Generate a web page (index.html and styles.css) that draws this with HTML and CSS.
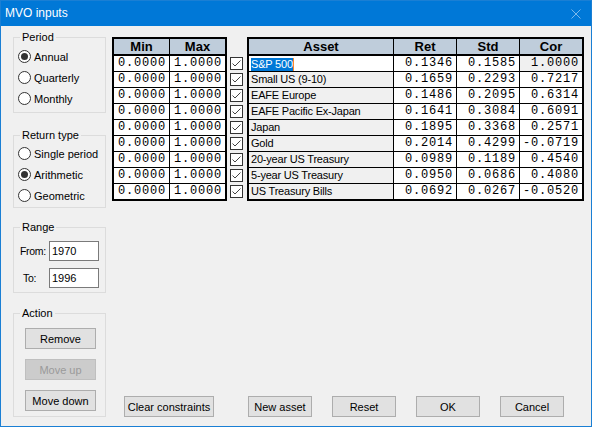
FILE: index.html
```html
<!DOCTYPE html>
<html lang="en">
<head>
<meta charset="utf-8">
<title>MVO inputs</title>
<link rel="stylesheet" href="styles.css">
</head>
<body>
<div class="window">
  <div class="titlebar">
    <span class="title">MVO inputs</span>
    <svg class="close" width="10" height="10" viewBox="0 0 10 10"><path d="M0.5 0.5 L9.5 9.5 M9.5 0.5 L0.5 9.5" stroke="#7db8ea" stroke-width="1" fill="none"/></svg>
  </div>
  <div class="client">
    <div class="sidebar">
      <fieldset class="group g-period">
        <legend>Period</legend>
        <div class="radio"><span class="dot on"></span>Annual</div>
        <div class="radio"><span class="dot"></span>Quarterly</div>
        <div class="radio"><span class="dot"></span>Monthly</div>
      </fieldset>
      <fieldset class="group g-return">
        <legend>Return type</legend>
        <div class="radio"><span class="dot"></span>Single period</div>
        <div class="radio"><span class="dot on"></span>Arithmetic</div>
        <div class="radio"><span class="dot"></span>Geometric</div>
      </fieldset>
      <fieldset class="group g-range">
        <legend>Range</legend>
        <div class="field"><span class="flabel">From:</span><input class="input" type="text" value="1970"></div>
        <div class="field"><span class="flabel to">To:</span><input class="input" type="text" value="1996"></div>
      </fieldset>
      <fieldset class="group g-action">
        <legend>Action</legend>
        <button class="btn side">Remove</button>
        <button class="btn side" disabled>Move up</button>
        <button class="btn side">Move down</button>
      </fieldset>
    </div>
    <div class="main">
      <div class="grids">
        <div class="grid minmax">
          <div class="hd">Min</div><div class="hd">Max</div>
          <div class="num">0.0000</div><div class="num">1.0000</div>
          <div class="num">0.0000</div><div class="num">1.0000</div>
          <div class="num">0.0000</div><div class="num">1.0000</div>
          <div class="num">0.0000</div><div class="num">1.0000</div>
          <div class="num">0.0000</div><div class="num">1.0000</div>
          <div class="num">0.0000</div><div class="num">1.0000</div>
          <div class="num">0.0000</div><div class="num">1.0000</div>
          <div class="num">0.0000</div><div class="num">1.0000</div>
          <div class="num">0.0000</div><div class="num">1.0000</div>
        </div>
        <div class="checks">
          <svg class="cb" width="13" height="13" viewBox="0 0 13 13"><rect x="0.5" y="0.5" width="12" height="12" fill="#fff" stroke="#333"/><path d="M2.5 6.5 L5 9 L10.5 3.5" stroke="#444" fill="none"/></svg>
          <svg class="cb" width="13" height="13" viewBox="0 0 13 13"><rect x="0.5" y="0.5" width="12" height="12" fill="#fff" stroke="#333"/><path d="M2.5 6.5 L5 9 L10.5 3.5" stroke="#444" fill="none"/></svg>
          <svg class="cb" width="13" height="13" viewBox="0 0 13 13"><rect x="0.5" y="0.5" width="12" height="12" fill="#fff" stroke="#333"/><path d="M2.5 6.5 L5 9 L10.5 3.5" stroke="#444" fill="none"/></svg>
          <svg class="cb" width="13" height="13" viewBox="0 0 13 13"><rect x="0.5" y="0.5" width="12" height="12" fill="#fff" stroke="#333"/><path d="M2.5 6.5 L5 9 L10.5 3.5" stroke="#444" fill="none"/></svg>
          <svg class="cb" width="13" height="13" viewBox="0 0 13 13"><rect x="0.5" y="0.5" width="12" height="12" fill="#fff" stroke="#333"/><path d="M2.5 6.5 L5 9 L10.5 3.5" stroke="#444" fill="none"/></svg>
          <svg class="cb" width="13" height="13" viewBox="0 0 13 13"><rect x="0.5" y="0.5" width="12" height="12" fill="#fff" stroke="#333"/><path d="M2.5 6.5 L5 9 L10.5 3.5" stroke="#444" fill="none"/></svg>
          <svg class="cb" width="13" height="13" viewBox="0 0 13 13"><rect x="0.5" y="0.5" width="12" height="12" fill="#fff" stroke="#333"/><path d="M2.5 6.5 L5 9 L10.5 3.5" stroke="#444" fill="none"/></svg>
          <svg class="cb" width="13" height="13" viewBox="0 0 13 13"><rect x="0.5" y="0.5" width="12" height="12" fill="#fff" stroke="#333"/><path d="M2.5 6.5 L5 9 L10.5 3.5" stroke="#444" fill="none"/></svg>
          <svg class="cb" width="13" height="13" viewBox="0 0 13 13"><rect x="0.5" y="0.5" width="12" height="12" fill="#fff" stroke="#333"/><path d="M2.5 6.5 L5 9 L10.5 3.5" stroke="#444" fill="none"/></svg>
        </div>
        <div class="grid assets">
          <div class="hd">Asset</div><div class="hd">Ret</div><div class="hd">Std</div><div class="hd">Cor</div>
          <div class="name"><span class="sel">S&amp;P 500</span></div><div class="num">0.1346</div><div class="num">0.1585</div><div class="num ro">1.0000</div>
          <div class="name ro">Small US (9-10)</div><div class="num">0.1659</div><div class="num">0.2293</div><div class="num">0.7217</div>
          <div class="name ro">EAFE Europe</div><div class="num">0.1486</div><div class="num">0.2095</div><div class="num">0.6314</div>
          <div class="name ro">EAFE Pacific Ex-Japan</div><div class="num">0.1641</div><div class="num">0.3084</div><div class="num">0.6091</div>
          <div class="name ro">Japan</div><div class="num">0.1895</div><div class="num">0.3368</div><div class="num">0.2571</div>
          <div class="name ro">Gold</div><div class="num">0.2014</div><div class="num">0.4299</div><div class="num">-0.0719</div>
          <div class="name ro">20-year US Treasury</div><div class="num">0.0989</div><div class="num">0.1189</div><div class="num">0.4540</div>
          <div class="name ro">5-year US Treasury</div><div class="num">0.0950</div><div class="num">0.0686</div><div class="num">0.4080</div>
          <div class="name ro">US Treasury Bills</div><div class="num">0.0692</div><div class="num">0.0267</div><div class="num">-0.0520</div>
        </div>
      </div>
      <div class="actions">
        <button class="btn wide">Clear constraints</button>
        <button class="btn std">New asset</button>
        <button class="btn std">Reset</button>
        <button class="btn std">OK</button>
        <button class="btn std">Cancel</button>
      </div>
    </div>
  </div>
</div>
</body>
</html>
```

FILE: styles.css
```css
* { box-sizing: border-box; }
html, body { margin: 0; padding: 0; background: #f0f0f0; }
body { font-family: "Liberation Sans", Arial, sans-serif; font-size: 11px; color: #000; }

.window {
  width: 592px;
  height: 427px;
  border: 1px solid #1a7fd4;
  background: #f0f0f0;
  display: flex;
  flex-direction: column;
}

.titlebar {
  height: 25px;
  background: #0078d7;
  color: #fff;
  display: flex;
  align-items: center;
  justify-content: space-between;
  padding: 0 10px 0 4px;
  flex: none;
}
.title { font-size: 12px; line-height: 15px; }
.close { display: block; }

.client {
  flex: 1;
  display: flex;
  min-height: 0;
}

.sidebar {
  width: 105px;
  padding-left: 12px;
  flex: none;
  display: flex;
  flex-direction: column;
}

.group {
  margin: 0;
  padding: 0;
  min-width: 0;
  border: 1px solid #dcdcdc;
  width: 93px;
}
.group legend {
  margin-left: 6px;
  padding: 0 2px;
  line-height: 15px;
  height: 15px;
  font-size: 11px;
}
.g-period { margin-top: 4px; height: 83px; padding-top: 1px; }
.g-return { margin-top: 15px; height: 80px; }
.g-range { margin-top: 12px; height: 73px; padding-top: 6px; }
.g-action { margin-top: 13px; height: 111px; padding-top: 7px; display: flex; flex-direction: column; gap: 10px; }

.radio {
  height: 21px;
  display: flex;
  align-items: center;
  padding-left: 4px;
  gap: 3px;
}
.dot {
  width: 13px;
  height: 13px;
  border-radius: 50%;
  border: 1px solid #333;
  background: #fff;
  display: flex;
  align-items: center;
  justify-content: center;
  flex: none;
}
.dot.on::after {
  content: "";
  width: 7px;
  height: 7px;
  border-radius: 50%;
  background: #333;
}

.field {
  display: flex;
  align-items: center;
  height: 20px;
  padding-left: 6px;
  margin-bottom: 7px;
}
.flabel { width: 29px; flex: none; font-size: 10.5px; letter-spacing: -0.3px; }
.flabel.to { padding-left: 3px; }
.input {
  width: 50px;
  height: 20px;
  border: 1px solid #7a7a7a;
  background: #fff;
  font-family: "Liberation Sans", Arial, sans-serif;
  font-size: 11px;
  padding: 0 2px;
  margin: 0;
  color: #000;
}

.btn {
  font-family: "Liberation Sans", Arial, sans-serif;
  font-size: 11px;
  color: #000;
  background: #e1e1e1;
  border: 1px solid #adadad;
  height: 21px;
  padding: 0;
  margin: 0;
}
.btn:disabled { background: #cccccc; border-color: #bfbfbf; color: #9a9a9a; }
.btn.side { width: 71px; margin-left: 11px; flex: none; }

.main {
  flex: 1;
  margin-left: 6px;
  padding-top: 11px;
  display: flex;
  flex-direction: column;
}

.grids { display: flex; align-items: flex-start; }

.grid {
  display: grid;
  gap: 1px;
  background: #000;
  border: 2px solid #000;
  grid-auto-rows: 15px;
  grid-template-rows: 16px;
}
.minmax { grid-template-columns: 55px 55px; }
.assets { grid-template-columns: 144px 62px 62px 62px; }

.hd {
  background: #bfcddb;
  border-bottom: 1px solid #000;
  font-weight: bold;
  font-size: 13px;
  line-height: 15px;
  text-align: center;
}
.num, .name {
  background: #fff;
  line-height: 15px;
  white-space: nowrap;
  overflow: hidden;
}
.num {
  font-family: "Liberation Mono", "DejaVu Sans Mono", monospace;
  font-size: 12px;
  letter-spacing: 0.8px;
  text-align: right;
  padding-right: 3px;
}
.name {
  font-size: 11px;
  letter-spacing: -0.2px;
  padding-left: 2px;
}
.ro { background: #f0f0f0; }
.sel {
  background: #0078d7;
  color: #fff;
  border-right: 1px solid #ff8728;
  display: inline-block;
  line-height: 13px;
  vertical-align: middle;
}

.checks {
  display: flex;
  flex-direction: column;
  gap: 3px;
  padding-top: 20px;
  margin: 0 4px 0 3px;
}
.cb { display: block; }

.actions {
  margin-top: auto;
  padding-left: 12px;
  padding-bottom: 9px;
  display: flex;
  gap: 20px;
}
.btn.wide { width: 90px; margin-right: 14px; }
.btn.std { width: 64px; }
```
